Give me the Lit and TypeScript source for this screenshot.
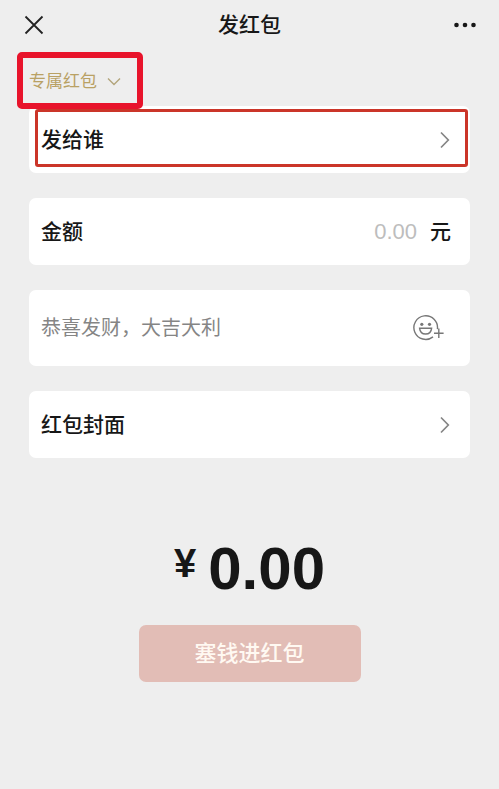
import { LitElement, html, css } from "lit";
import { customElement } from "lit/decorators.js";

const chevronRight = html`<svg class="chevron" width="12" height="18" viewBox="0 0 12 18" aria-hidden="true">
  <path d="M2 1.5 L9.3 9 L2 16.5" fill="none" stroke="#858585" stroke-width="1.7" />
</svg>`;

@customElement("app-root")
export class AppRoot extends LitElement {
  static styles = css`
    :host {
      display: block;
      min-height: 100vh;
      background: #eeeeee;
      color: #171717;
      font-family: "Liberation Sans", "Noto Sans CJK SC", sans-serif;
      font-size: 21px;
      line-height: 30px;
    }
    * {
      box-sizing: border-box;
    }
    button,
    input {
      margin: 0;
      padding: 0;
      border: 0;
      background: none;
      color: inherit;
      font: inherit;
    }
    svg {
      display: block;
    }
    header {
      display: grid;
      grid-template-columns: 24px 1fr 24px;
      align-items: center;
      height: 50px;
      padding: 0 22px;
    }
    h1 {
      margin: 0;
      text-align: center;
      font-size: 21px;
      font-weight: 500;
    }
    .type {
      position: relative;
      z-index: 1;
      display: flex;
      align-items: center;
      gap: 10px;
      height: 57px;
      margin: 2px 0 0 17px;
      padding: 2px 16px 0 6px;
      border: 6px solid #e8132b;
      border-radius: 5px;
      color: #b9a164;
      font-size: 17px;
    }
    form {
      display: flex;
      flex-direction: column;
      gap: 25px;
      margin: -3px 29px 0;
    }
    .card {
      position: relative;
      display: flex;
      align-items: center;
      width: 100%;
      height: 67px;
      padding: 0 19px 0 12px;
      border-radius: 7px;
      background: #ffffff;
      font-weight: 500;
      text-align: left;
    }
    .card span,
    .card label {
      flex: 1;
    }
    .marked::after {
      content: "";
      position: absolute;
      inset: 3px 2px 6px 6px;
      border: 3px solid #cb3529;
      border-radius: 3px;
    }
    .amount {
      width: 60px;
      margin-right: 13px;
      font-size: 22px;
      font-weight: 400;
      text-align: right;
    }
    .card .unit {
      flex: none;
    }
    .message {
      height: 76px;
      padding-right: 26px;
    }
    .greeting {
      flex: 1;
      min-width: 0;
      font-size: 20px;
      font-weight: 400;
    }
    input::placeholder {
      color: #bdbdbd;
      opacity: 1;
    }
    .greeting::placeholder {
      color: #858585;
    }
    .total {
      display: flex;
      justify-content: center;
      gap: 12px;
      margin: 80px 0 0;
      font-size: 60px;
      font-weight: 700;
      line-height: 62px;
    }
    .yen {
      font-size: 40px;
      line-height: 50px;
    }
    .submit {
      display: block;
      width: 222px;
      height: 57px;
      margin: 25px auto 0;
      border-radius: 7px;
      background: #e2bdb6;
      color: #fff9f2;
      font-size: 22px;
      font-weight: 500;
    }
  `;

  render() {
    return html`
      <header>
        <button aria-label="关闭">
          <svg width="24" height="24" viewBox="0 0 24 24">
            <path d="M3.5 3.5 L20.5 20.5 M20.5 3.5 L3.5 20.5" stroke="#222" stroke-width="1.8" />
          </svg>
        </button>
        <h1>发红包</h1>
        <button aria-label="更多">
          <svg width="24" height="24" viewBox="0 0 24 24" fill="#171717">
            <circle cx="3.5" cy="12" r="2.3" />
            <circle cx="12" cy="12" r="2.3" />
            <circle cx="20.5" cy="12" r="2.3" />
          </svg>
        </button>
      </header>
      <button class="type" aria-haspopup="listbox">
        专属红包
        <svg width="14" height="10" viewBox="0 0 14 10" aria-hidden="true">
          <path d="M1 1.5 L7 7.5 L13 1.5" fill="none" stroke="#b3a57c" stroke-width="1.4" />
        </svg>
      </button>
      <form>
        <button type="button" class="card marked"><span>发给谁</span>${chevronRight}</button>
        <div class="card">
          <label for="amount">金额</label>
          <input id="amount" class="amount" inputmode="decimal" placeholder="0.00" />
          <span class="unit">元</span>
        </div>
        <div class="card message">
          <input class="greeting" aria-label="祝福语" placeholder="恭喜发财，大吉大利" />
          <button type="button" aria-label="添加表情">
            <svg width="32" height="28" viewBox="0 0 32 28" fill="none" stroke="#777" stroke-width="1.4">
              <path d="M25.4 15.2 A11.8 11.8 0 1 0 21 22.9" />
              <path d="M7.6 14.3 H19.6 C19.2 18 16.8 20 13.6 20 C10.4 20 8 18 7.6 14.3 Z" />
              <path d="M26.8 14.5 V24 M22 19.2 H31.6" />
              <circle cx="9.8" cy="10.3" r="1.6" fill="#777" stroke="none" />
              <circle cx="17.5" cy="10.3" r="1.6" fill="#777" stroke="none" />
            </svg>
          </button>
        </div>
        <button type="button" class="card"><span>红包封面</span>${chevronRight}</button>
      </form>
      <p class="total"><span class="yen">¥</span><span>0.00</span></p>
      <button class="submit">塞钱进红包</button>
    `;
  }
}
